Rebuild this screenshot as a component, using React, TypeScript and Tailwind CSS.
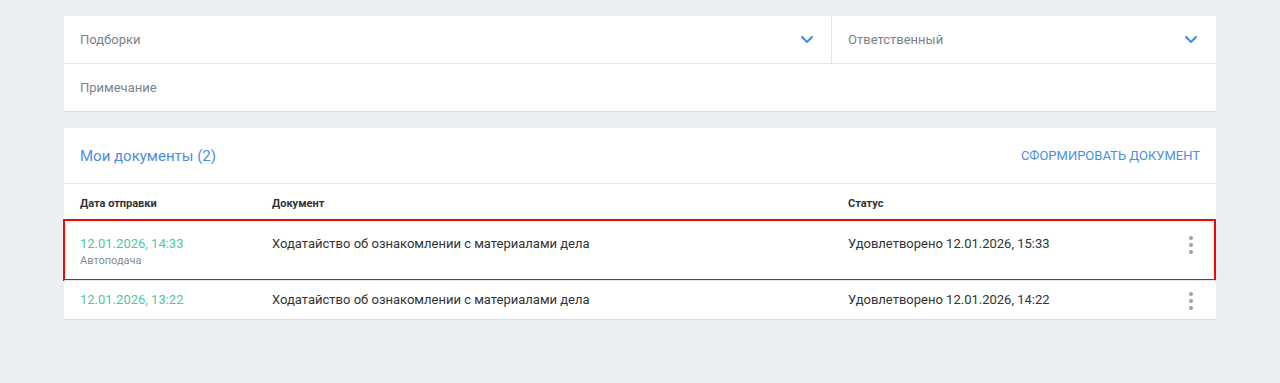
import * as React from "react";

const ROWS = [
  { date: "12.01.2026, 14:33", sub: "Автоподача", doc: "Ходатайство об ознакомлении с материалами дела", status: "Удовлетворено 12.01.2026, 15:33", marked: true },
  { date: "12.01.2026, 13:22", sub: "", doc: "Ходатайство об ознакомлении с материалами дела", status: "Удовлетворено 12.01.2026, 14:22", marked: false },
];

function Chevron() {
  return (
    <svg width="14" height="9" viewBox="0 0 14 9" fill="none">
      <path d="M2 2 L7 7 L12 2" stroke="#3d8ce6" strokeWidth="2" strokeLinecap="round" strokeLinejoin="round" />
    </svg>
  );
}

function Dots() {
  return (
    <div className="flex flex-col items-center gap-[3px]">
      <span className="w-[4px] h-[4px] rounded-full bg-[#9aa0a6]" />
      <span className="w-[4px] h-[4px] rounded-full bg-[#9aa0a6]" />
      <span className="w-[4px] h-[4px] rounded-full bg-[#9aa0a6]" />
    </div>
  );
}

export default function App() {
  return (
    <div className="min-h-[383px] bg-[#eceff1] px-16 pt-4 pb-4 text-[13px] text-[#333] font-['Roboto',sans-serif]">
      {/* Filters */}
      <div className="bg-white border-b border-[#dcdfe2]">
        <div className="grid grid-cols-[768px_1fr] h-[48px] border-b border-[#e3e6e8]">
          <div className="flex items-center justify-between pl-4 pr-[17px] border-r border-[#e3e6e8]">
            <span className="text-[#7a828b]">Подборки</span>
            <Chevron />
          </div>
          <div className="flex items-center justify-between pl-4 pr-[18px]">
            <span className="text-[#7a828b]">Ответственный</span>
            <Chevron />
          </div>
        </div>
        <div className="h-[47px] flex items-center pl-4">
          <span className="text-[#7a828b]">Примечание</span>
        </div>
      </div>

      {/* Documents */}
      <div className="mt-4 bg-white border-b border-[#dcdfe2]">
        <div className="h-[56px] flex items-center justify-between px-4 pt-[1px] border-b border-[#e3e6e8]">
          <span className="text-[15px] text-[#4a8fe0]">Мои документы (2)</span>
          <span className="text-[13px] text-[#4a8fe0] uppercase">Сформировать документ</span>
        </div>
        <div className="grid grid-cols-[192px_576px_1fr] h-[36px] items-center pt-[4px] px-4 text-[11px] font-bold text-[#333]">
          <span>Дата отправки</span>
          <span>Документ</span>
          <span>Статус</span>
        </div>
        {ROWS.map((r, i) => (
          <div key={i} className={"relative border-t border-[#e3e6e8] " + (r.marked ? "h-[60px]" : "h-[39px]")}>
            {r.marked && <div className="absolute left-[-1px] right-0 top-[-2px] bottom-[-1px] border-2 border-[#ff0000] pointer-events-none" />}
            <div className={"grid grid-cols-[192px_576px_1fr] px-4 " + (r.marked ? "pt-[14px]" : "pt-[10px]")}>
              <div className="flex flex-col">
                <span className="text-[#4cc9a2] leading-[18px]">{r.date}</span>
                {r.sub && <span className="text-[11px] text-[#858c94] leading-[15px]">{r.sub}</span>}
              </div>
              <span className="leading-[18px]">{r.doc}</span>
              <div className="flex items-start justify-between">
                <span className="leading-[18px]">{r.status}</span>
                <div className="pr-[7px] pt-[1px]">
                  <Dots />
                </div>
              </div>
            </div>
          </div>
        ))}
      </div>
    </div>
  );
}
